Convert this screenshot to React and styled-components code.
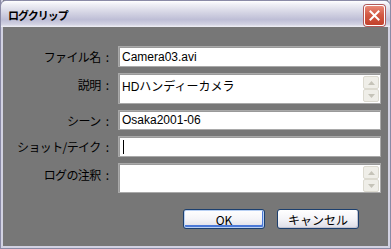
import React from "react";
import styled, { createGlobalStyle } from "styled-components";

const GlobalStyle = createGlobalStyle`
  html, body {
    margin: 0;
    padding: 0;
    background: #777777;
  }
  body {
    font-family: "Noto Sans CJK JP", "Liberation Sans", sans-serif;
  }
`;

const Window = styled.div`
  width: 391px;
  height: 249px;
  box-sizing: border-box;
  display: flex;
  flex-direction: column;
  background: #777777;
  border: 1px solid #8a8aa6;
  border-top: none;
  box-shadow: inset 2px 0 0 #d2d2e2, inset -2px 0 0 #d2d2e2, inset 0 -2px 0 #d2d2e2;
`;

const TitleBar = styled.div`
  height: 27px;
  flex-shrink: 0;
  display: flex;
  align-items: center;
  justify-content: space-between;
  padding: 0 5px 0 7px;
  margin: 0 -1px;
  border: 1px solid #8a8aa6;
  border-bottom: none;
  border-radius: 6px 6px 0 0;
  background: linear-gradient(
    to bottom,
    #ffffff 0%,
    #f0f0f6 12%,
    #d8d8e6 40%,
    #bebed6 72%,
    #d2d2e2 90%,
    #f0f0f6 100%
  );
  box-sizing: border-box;
`;

const Title = styled.span`
  font-size: 11px;
  font-weight: bold;
  letter-spacing: -1px;
  color: #000;
  margin-top: 1px;
`;

const CloseButton = styled.div`
  width: 21px;
  height: 21px;
  box-sizing: border-box;
  border: 1px solid #ffffff;
  border-radius: 3px;
  background: linear-gradient(to bottom, #e98a78 0%, #d35a44 45%, #c2412c 100%);
  box-shadow: 0 0 0 1px #b05a5a;
  display: flex;
  align-items: center;
  justify-content: center;
  margin-top: 2px;
`;

const Body = styled.div`
  flex: 1;
  display: flex;
  flex-direction: column;
  padding: 19px 10px 0 0;
`;

const Form = styled.div`
  display: grid;
  grid-template-columns: 117px 263px;
  row-gap: 6px;
`;

const Label = styled.div`
  font-size: 12px;
  letter-spacing: -0.6px;
  color: #000;
  text-align: right;
  padding-right: 9px;
  align-self: ${(p) => (p.$multi ? "start" : "center")};
  padding-top: ${(p) => (p.$multi ? "3px" : "0")};
  white-space: nowrap;
`;

const Colon = styled.span`
  margin-left: 5px;
  letter-spacing: 0;
`;

const Field = styled.div`
  position: relative;
  height: ${(p) => p.$h}px;
  box-sizing: border-box;
  background: #ffffff;
  border: 1px solid #a9a9a9;
  box-shadow: inset 1px 1px 0 #9a9a9a;
  padding: ${(p) => (p.$multi ? "3px 0 0 3px" : "0 0 0 3px")};
  display: flex;
  align-items: ${(p) => (p.$multi ? "flex-start" : "center")};
  font-family: "Liberation Sans", "Noto Sans CJK JP", sans-serif;
  font-size: 12px;
  color: #000;
`;

const Caret = styled.span`
  width: 1px;
  height: 14px;
  background: #000;
  margin-left: 1px;
`;

const Spinner = styled.div`
  position: absolute;
  right: 1px;
  top: 2px;
  display: flex;
  flex-direction: column;
`;

const SpinButton = styled.div`
  width: 16px;
  height: 13px;
  box-sizing: border-box;
  border: 1px solid #dcdad0;
  border-radius: 2px;
  background: #efeee8;
  display: flex;
  align-items: center;
  justify-content: center;
`;

const ButtonRow = styled.div`
  display: flex;
  justify-content: flex-end;
  gap: 12px;
  margin-top: 16px;
  padding-right: 21px;
`;

const Button = styled.div`
  width: 82px;
  height: 20px;
  box-sizing: border-box;
  border: 1px solid #1c3f6e;
  border-radius: 3px;
  background: linear-gradient(to bottom, #ffffff 0%, #f4f4f8 50%, #dcdce6 100%);
  box-shadow: ${(p) =>
    p.$default
      ? "inset 0 0 0 1px #b8d0f4, inset -1px -2px 0 1px #4a78d8"
      : "inset -1px -1px 0 #c4c4d0"};
  display: flex;
  align-items: center;
  justify-content: center;
  font-size: 12px;
  color: #000;
`;

function Arrow({ up }) {
  return (
    <svg width="7" height="4" viewBox="0 0 7 4">
      <polygon points={up ? "0,4 7,4 3.5,0" : "0,0 7,0 3.5,4"} fill="#c5c3b8" />
    </svg>
  );
}

function Spin() {
  return (
    <Spinner>
      <SpinButton>
        <Arrow up />
      </SpinButton>
      <SpinButton>
        <Arrow />
      </SpinButton>
    </Spinner>
  );
}

function FieldLabel({ text, multi }) {
  return (
    <Label $multi={multi}>
      {text}
      <Colon>:</Colon>
    </Label>
  );
}

export default function App() {
  return (
    <>
      <GlobalStyle />
      <Window>
        <TitleBar>
          <Title>ログクリップ</Title>
          <CloseButton>
            <svg width="11" height="11" viewBox="0 0 11 11">
              <path
                d="M1.5 1.5 L9.5 9.5 M9.5 1.5 L1.5 9.5"
                stroke="#ffffff"
                strokeWidth="2"
                strokeLinecap="square"
              />
            </svg>
          </CloseButton>
        </TitleBar>
        <Body>
          <Form>
            <FieldLabel text="ファイル名" />
            <Field $h={21}>Camera03.avi</Field>

            <FieldLabel text="説明" multi />
            <Field $h={31} $multi>
              HDハンディーカメラ
              <Spin />
            </Field>

            <FieldLabel text="シーン" />
            <Field $h={20}>Osaka2001-06</Field>

            <FieldLabel text="ショット/テイク" />
            <Field $h={21}>
              <Caret />
            </Field>

            <FieldLabel text="ログの注釈" multi />
            <Field $h={30} $multi>
              <Spin />
            </Field>
          </Form>
          <ButtonRow>
            <Button $default>OK</Button>
            <Button>キャンセル</Button>
          </ButtonRow>
        </Body>
      </Window>
    </>
  );
}
